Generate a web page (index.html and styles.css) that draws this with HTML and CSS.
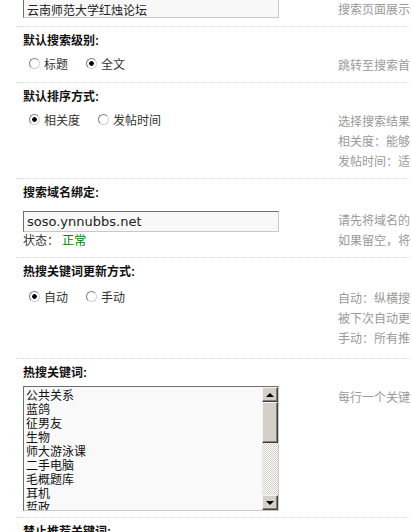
FILE: index.html
```html
<!DOCTYPE html>
<html lang="zh-CN">
<head>
    <meta charset="UTF-8">
    <title>搜索设置</title>
    <link rel="stylesheet" href="styles.css">
</head>
<body>
    <div class="settings">
        <div class="setting setting-first">
            <div class="setting-body">
                <div class="setting-field">
                    <input class="txt txt-name" type="text" value="云南师范大学红烛论坛">
                </div>
                <div class="setting-tips">搜索页面展示的站点名称，留空则使用论坛名称</div>
            </div>
        </div>

        <div class="setting">
            <div class="setting-title">默认搜索级别:</div>
            <div class="setting-body">
                <div class="setting-field">
                    <ul class="radios">
                        <li><label><input type="radio" name="level">标题</label></li>
                        <li><label><input type="radio" name="level" checked>全文</label></li>
                    </ul>
                </div>
                <div class="setting-tips">跳转至搜索首页时默认使用的搜索级别</div>
            </div>
        </div>

        <div class="setting">
            <div class="setting-title">默认排序方式:</div>
            <div class="setting-body">
                <div class="setting-field">
                    <ul class="radios">
                        <li><label><input type="radio" name="order" checked>相关度</label></li>
                        <li><label><input type="radio" name="order">发帖时间</label></li>
                    </ul>
                </div>
                <div class="setting-tips">
                    选择搜索结果的默认排序方式<br>
                    相关度：能够更准确地找到想要的内容<br>
                    发帖时间：适合查找最新发布的内容
                </div>
            </div>
        </div>

        <div class="setting">
            <div class="setting-title">搜索域名绑定:</div>
            <div class="setting-body">
                <div class="setting-field">
                    <input class="txt txt-domain" type="text" value="soso.ynnubbs.net">
                    <div class="status">状态： <span class="status-ok">正常</span></div>
                </div>
                <div class="setting-tips tips-domain">
                    请先将域名的 CNAME 解析至搜索服务器<br>
                    如果留空，将使用默认的搜索域名
                </div>
            </div>
        </div>

        <div class="setting setting-hot">
            <div class="setting-title">热搜关键词更新方式:</div>
            <div class="setting-body">
                <div class="setting-field">
                    <ul class="radios">
                        <li><label><input type="radio" name="hot" checked>自动</label></li>
                        <li><label><input type="radio" name="hot">手动</label></li>
                    </ul>
                </div>
                <div class="setting-tips">
                    自动：纵横搜索根据搜索情况自动生成，手动添加的关键词<br>
                    被下次自动更新时覆盖<br>
                    手动：所有推荐关键词均由管理员设置
                </div>
            </div>
        </div>

        <div class="setting">
            <div class="setting-title">热搜关键词:</div>
            <div class="setting-body">
                <div class="setting-field">
                    <div class="textarea">
                        <div class="textarea-lines">
                            公共关系<br>蓝鸽<br>征男友<br>生物<br>师大游泳课<br>二手电脑<br>毛概题库<br>耳机<br>哲政
                        </div>
                        <div class="scrollbar">
                            <div class="scroll-btn scroll-up"></div>
                            <div class="scroll-thumb"></div>
                            <div class="scroll-track"></div>
                            <div class="scroll-btn scroll-down"></div>
                        </div>
                    </div>
                </div>
                <div class="setting-tips">每行一个关键词</div>
            </div>
        </div>

        <div class="setting">
            <div class="setting-title">禁止推荐关键词:</div>
        </div>
    </div>
</body>
</html>
```

FILE: styles.css
```css
body {
    margin: 0;
    font-family: "Liberation Sans", "Noto Sans CJK SC", sans-serif;
    font-size: 12px;
    color: #333;
    background: #fff;
    overflow: hidden;
}
.settings {
    width: 900px;
    padding-left: 16px;
}
.setting {
    border-top: 1px dotted #d6d6d6;
    padding: 0 0 6px 7px;
}
.setting-first {
    border-top: 0;
    margin-top: -6px;
    padding-bottom: 6px;
}
.setting-hot {
    padding-bottom: 9px;
}
.setting-title {
    font-weight: bold;
    color: #111;
    line-height: 18px;
    padding-top: 5px;
}
.setting-body {
    display: grid;
    grid-template-columns: 315px auto;
    padding-top: 3px;
}
.setting-tips {
    color: #999;
    line-height: 20px;
    padding-top: 3px;
    white-space: nowrap;
}
.setting-hot .setting-tips {
    padding-top: 5px;
}
.tips-domain {
    padding-top: 6px;
}
.txt {
    display: block;
    box-sizing: border-box;
    width: 256px;
    height: 21px;
    margin: 0;
    padding: 0 3px;
    border: 1px solid;
    border-color: #6e6e6e #c8c8c8 #c8c8c8 #6e6e6e;
    background: #f8f8f8;
    font-family: "Noto Sans CJK SC", sans-serif;
    font-size: 12px;
    color: #222;
}
.txt-name {
    padding-top: 4px;
}
.txt-domain {
    margin-top: 6px;
    font-family: "DejaVu Sans", sans-serif;
    font-size: 13px;
}
.status {
    line-height: 18px;
}
.status-ok {
    color: #008000;
}
.radios {
    list-style: none;
    margin: 0;
    padding: 0;
    display: flex;
    height: 20px;
    align-items: center;
}
.setting-hot .radios {
    margin-top: 2px;
}
.radios li {
    margin-right: 12px;
}
.radios label {
    display: flex;
    align-items: center;
    color: #333;
}
.radios input {
    -webkit-appearance: none;
    appearance: none;
    box-sizing: border-box;
    width: 11px;
    height: 11px;
    margin: 0 4px 0 6px;
    border: 1px solid;
    border-color: #7b7b7b #d0d0d0 #d0d0d0 #7b7b7b;
    border-radius: 50%;
    background: #fff;
}
.radios input:checked {
    background: radial-gradient(circle, #000 0 2px, #fff 2.6px);
}
.textarea {
    display: flex;
    box-sizing: border-box;
    width: 256px;
    height: 125px;
    margin-top: 1px;
    border: 1px solid;
    border-color: #6e6e6e #c8c8c8 #c8c8c8 #6e6e6e;
    background: #f9f9f9;
}
.textarea-lines {
    flex: 1;
    overflow: hidden;
    padding: 1px 2px;
    line-height: 14px;
    color: #111;
    font-family: "Noto Sans CJK SC", sans-serif;
}
.scrollbar {
    width: 16px;
    display: flex;
    flex-direction: column;
}
.scroll-btn,
.scroll-thumb {
    box-sizing: border-box;
    background: #d4d0c8;
    border: 1px solid;
    border-color: #f4f4f4 #404040 #404040 #f4f4f4;
    box-shadow: inset -1px -1px #808080;
}
.scroll-btn {
    height: 15px;
    display: flex;
    align-items: center;
    justify-content: center;
}
.scroll-btn::after {
    content: "";
    border-left: 4px solid transparent;
    border-right: 4px solid transparent;
}
.scroll-up::after {
    border-bottom: 4px solid #000;
}
.scroll-down::after {
    border-top: 4px solid #000;
}
.scroll-thumb {
    height: 41px;
}
.scroll-track {
    flex: 1;
    background: repeating-conic-gradient(#d4d0c8 0 25%, #fff 0 50%) 0 0 / 2px 2px;
}
```
